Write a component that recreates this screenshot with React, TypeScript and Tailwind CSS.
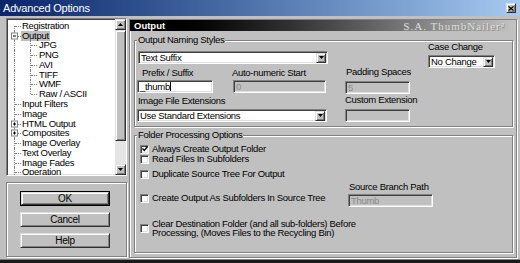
import React from "react";

const sunken =
  "border border-t-[#808080] border-l-[#808080] border-b-white border-r-white shadow-[inset_1px_1px_0_#404040,inset_-1px_-1px_0_#dfdfdf]";
const raised =
  "border border-t-[#dfdfdf] border-l-[#dfdfdf] border-b-[#303030] border-r-[#303030] shadow-[inset_1px_1px_0_#fff,inset_-1px_-1px_0_#808080]";
const etched = "border border-[#808080] shadow-[1px_1px_0_#fff,inset_1px_1px_0_#fff]";

const tree = [
  { label: "Registration", level: 0, first: true },
  { label: "Output", level: 0, box: "-", selected: true },
  { label: "JPG", level: 1 },
  { label: "PNG", level: 1 },
  { label: "AVI", level: 1 },
  { label: "TIFF", level: 1 },
  { label: "WMF", level: 1 },
  { label: "Raw / ASCII", level: 1, last: true },
  { label: "Input Filters", level: 0 },
  { label: "Image", level: 0 },
  { label: "HTML Output", level: 0, box: "+" },
  { label: "Composites", level: 0, box: "+" },
  { label: "Image Overlay", level: 0 },
  { label: "Text Overlay", level: 0 },
  { label: "Image Fades", level: 0 },
  { label: "Operation", level: 0 },
];

function Arrow({ up }: { up?: boolean }) {
  return (
    <svg width="5" height="3" viewBox="0 0 5 3">
      <path d={up ? "M0 3h5L2.5 0z" : "M0 0h5L2.5 3z"} fill="#000" />
    </svg>
  );
}

function DropBtn() {
  return (
    <span className={`ml-auto w-[10px] h-[10px] shrink-0 bg-[#c0c0c0] ${raised} flex items-center justify-center`}>
      <Arrow />
    </span>
  );
}

function Select({ value, className }: { value: string; className: string }) {
  return (
    <div className={`h-[13px] bg-white ${sunken} flex items-center pl-[2px] pr-[1px] ${className}`}>
      <span>{value}</span>
      <DropBtn />
    </div>
  );
}

function Field({ value, disabled, className }: { value: string; disabled?: boolean; className: string }) {
  return (
    <div
      className={`h-[13px] ${sunken} flex items-center pl-[2px] ${disabled ? "bg-[#c0c0c0] text-[#8a8a8a]" : "bg-white"} ${className}`}
    >
      {value}
      {!disabled && <span className="w-px h-[9px] bg-black" />}
    </div>
  );
}

function Check({ checked, label }: { checked?: boolean; label: React.ReactNode }) {
  return (
    <div className="flex items-center">
      <span className={`w-[9px] h-[9px] shrink-0 bg-white ${sunken} flex items-center justify-center`}>
        {checked && (
          <svg width="6" height="6" viewBox="0 0 6 6">
            <path d="M0.5 2.5l1.8 2 3.2-4" stroke="#000" strokeWidth="1.3" fill="none" />
          </svg>
        )}
      </span>
      <span className="ml-[3px]">{label}</span>
    </div>
  );
}

function Group({ title, className, children }: { title: string; className: string; children: React.ReactNode }) {
  return (
    <div className={`relative ml-[4px] mr-[3px] ${etched} ${className}`}>
      <span className="absolute -top-[6px] left-[2px] px-[1px] bg-[#c0c0c0] leading-[10px]">{title}</span>
      {children}
    </div>
  );
}

function Button({ label, def }: { label: string; def?: boolean }) {
  return (
    <div className={`w-[90px] h-[15px] ml-[13px] ${def ? "border border-black" : ""}`}>
      <div className={`w-full h-full bg-[#c0c0c0] ${raised} flex items-center justify-center text-[10px]`}>
        {label}
      </div>
    </div>
  );
}

export default function App() {
  return (
    <div className="w-[520px] h-[263px] bg-[#c0c0c0] flex flex-col overflow-hidden whitespace-nowrap font-['Liberation_Sans',Arial,sans-serif] text-[9.5px] tracking-[-0.3px] leading-[10px] text-black">
      {/* Title bar */}
      <div className="h-[16px] shrink-0 flex items-center pl-[3px] pr-[4px] bg-linear-to-r from-[#0a246a] to-[#a6caf0]">
        <span className="text-white text-[11px] tracking-[-0.2px]">Advanced Options</span>
        <span className={`ml-auto w-[10px] h-[10px] bg-[#c0c0c0] ${raised} flex items-center justify-center`}>
          <svg width="6" height="5" viewBox="0 0 6 5">
            <path d="M0.5 0.5l5 4M5.5 0.5l-5 4" stroke="#000" strokeWidth="1.2" />
          </svg>
        </span>
      </div>

      <div className="flex pt-[2px] pl-[6px]">
        {/* Left column */}
        <div className="w-[121px] flex flex-col">
          <div className={`h-[158px] bg-white ${sunken} flex`}>
            <div className="flex-1 overflow-hidden pt-[2px]">
              {tree.map((r) => (
                <div key={r.label} className="relative h-[9.77px] flex items-center">
                  <span
                    className={`absolute left-[7px] w-0 border-l border-dotted border-[#808080] ${r.first ? "top-1/2 bottom-0" : "top-0 bottom-0"}`}
                  />
                  {r.level === 0 && (
                    <span className="absolute left-[8px] top-1/2 w-[6px] h-0 border-t border-dotted border-[#808080]" />
                  )}
                  {r.level === 1 && (
                    <>
                      <span
                        className={`absolute left-[23px] w-0 border-l border-dotted border-[#808080] ${r.last ? "top-0 h-1/2" : "top-0 bottom-0"}`}
                      />
                      <span className="absolute left-[24px] top-1/2 w-[6px] h-0 border-t border-dotted border-[#808080]" />
                    </>
                  )}
                  {r.selected && (
                    <span className="absolute left-[23px] top-[85%] bottom-0 w-0 border-l border-dotted border-[#808080]" />
                  )}
                  {r.box && (
                    <span className="absolute left-[4px] top-1/2 -translate-y-1/2 w-[7px] h-[7px] bg-white border border-[#808080]">
                      <span className="absolute left-[1px] top-[2px] w-[3px] h-px bg-black" />
                      {r.box === "+" && <span className="absolute left-[2px] top-[1px] w-px h-[3px] bg-black" />}
                    </span>
                  )}
                  <span
                    className={`${r.level ? "ml-[31px]" : "ml-[14px]"} px-[1px] ${r.selected ? "bg-[#c0c0c0]" : ""}`}
                  >
                    {r.label}
                  </span>
                </div>
              ))}
            </div>
            {/* Scrollbar */}
            <div className="w-[11px] flex flex-col">
              <div className={`h-[11px] bg-[#c0c0c0] ${raised} flex items-center justify-center`}>
                <Arrow up />
              </div>
              <div className={`h-[111px] bg-[#c0c0c0] ${raised}`} />
              <div className="flex-1 bg-[#e4e4e4]" />
              <div className={`h-[11px] bg-[#c0c0c0] ${raised} flex items-center justify-center`}>
                <Arrow />
              </div>
            </div>
          </div>

          <div className={`mt-[6px] h-[75px] ${etched} flex flex-col pt-[8px] gap-[6px]`}>
            <Button label="OK" def />
            <Button label="Cancel" />
            <Button label="Help" />
          </div>
        </div>

        {/* Right panel */}
        <div className={`ml-[2px] mt-[1px] w-[388px] h-[239px] ${etched} flex flex-col`}>
          <div className="h-[11px] flex items-center justify-between pl-[4px] pr-[11px] bg-linear-to-r from-black from-5% to-[#c4c4c4]">
            <span className="text-white font-bold text-[9.5px] tracking-[0px]">Output</span>
            <span className="font-['Liberation_Serif',serif] text-[11px] tracking-[1px] text-[#dedede] [text-shadow:1px_1px_0_#8c8c8c]">
              S.A. ThumbNailer²
            </span>
          </div>

          <Group title="Output Naming Styles" className="mt-[9px] h-[87px] flex">
            <div className="ml-[2px] w-[192px] flex flex-col">
              <Select value="Text Suffix" className="mt-[10px] ml-[1px] w-[190px]" />
              <div className="mt-[4px] h-[10px] flex">
                <span className="w-[95px] pl-[5px]">Prefix / Suffix</span>
                <span>Auto-numeric Start</span>
              </div>
              <div className="mt-[2px] flex">
                <Field value="_thumb" className="w-[76px]" />
                <Field value="0" disabled className="ml-[20px] w-[93px]" />
              </div>
              <span className="mt-[3px] h-[10px] pl-[1px]">Image File Extensions</span>
              <Select value="Use Standard Extensions" className="mt-[3px] w-[190px]" />
            </div>
            <div className="ml-[16px] w-[66px] flex flex-col">
              <span className="mt-[26px] h-[10px] pl-[1px]">Padding Spaces</span>
              <Field value="5" disabled className="mt-[4px] w-[65px]" />
              <span className="mt-[1px] h-[10px]">Custom Extension</span>
              <Field value="" disabled className="mt-[4px] w-[65px]" />
            </div>
            <div className="ml-[17px] w-[67px] flex flex-col">
              <span className="mt-[1px] h-[10px]">Case Change</span>
              <Select value="No Change" className="mt-[3px] w-[67px]" />
            </div>
          </Group>

          <Group title="Folder Processing Options" className="mt-[8px] h-[118px] flex flex-col">
            <div className="mt-[8px] ml-[5px] h-[10px] flex items-center">
              <Check checked label="Always Create Output Folder" />
            </div>
            <div className="ml-[5px] h-[10px] flex items-center">
              <Check label="Read Files In Subfolders" />
            </div>
            <div className="mt-[5px] ml-[5px] h-[10px] flex items-center">
              <Check label="Duplicate Source Tree For Output" />
            </div>
            <div className="mt-[3px] flex items-end">
              <div className="w-[213px] pl-[5px] mb-[4px] h-[10px] flex items-center">
                <Check label="Create Output As Subfolders In Source Tree" />
              </div>
              <div className="w-[85px] flex flex-col">
                <span className="h-[10px] pl-[1px]">Source Branch Path</span>
                <Field value="Thumb" disabled className="mt-[2px] w-[85px]" />
              </div>
            </div>
            <div className="mt-[12px] ml-[5px] flex items-center">
              <Check
                label={
                  <span className="block leading-[9px]">
                    Clear Destination Folder (and all sub-folders) Before
                    <br />
                    Processing, (Moves Files to the Recycling Bin)
                  </span>
                }
              />
            </div>
          </Group>
        </div>
      </div>

      <div className="mt-auto h-[4px] border-t border-[#808080] bg-[#1a1a1a]" />
    </div>
  );
}
